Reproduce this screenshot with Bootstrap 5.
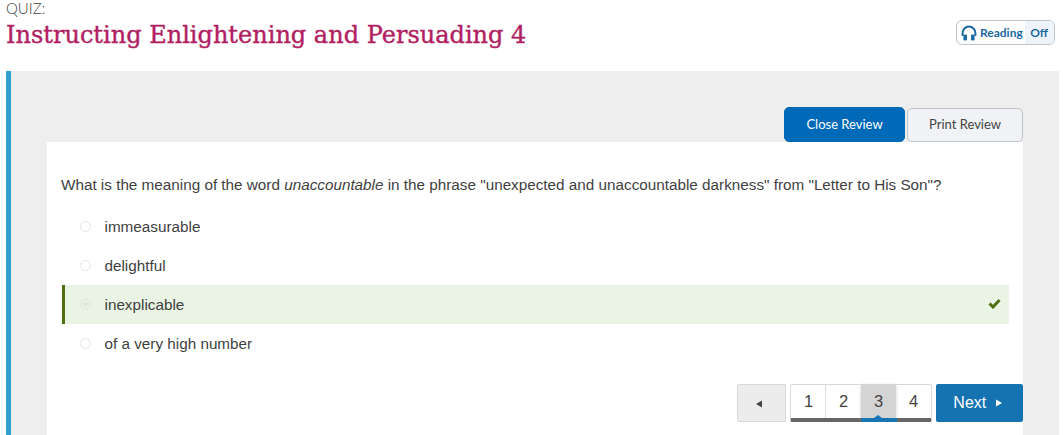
<!DOCTYPE html>
<html lang="en">
<head>
<meta charset="utf-8">
<title>Quiz</title>
<link rel="stylesheet" href="https://cdn.jsdelivr.net/npm/bootstrap@5.3.0/dist/css/bootstrap.min.css">
<style>
html,body{height:435px;overflow:hidden;background:#fff}
body{font-family:"Liberation Sans",Arial,sans-serif;color:#3f3f3f}
.top-head{height:71px;padding:0 8px 0 6px}
.quiz-label{font-family:Lato,sans-serif;font-size:15px;font-weight:300;line-height:16px;color:#444}
.quiz-title{font-family:"DejaVu Serif",serif;font-size:24px;line-height:36px;color:#b11f63;margin:1px 0 0;font-weight:400;letter-spacing:.01px;-webkit-text-stroke:.4px #b11f63}
.read-toggle{font-family:Lato,sans-serif;font-weight:700;font-size:12px;color:#1a6aa5;border:1px solid #bcc3c9;border-radius:6px;height:25px;margin-top:20px;width:99px;overflow:hidden;background:#fff}
.read-on{padding-left:4px;gap:3px;flex:1}
.read-off{background:#eef4f9;padding:0 6px 0 5px;height:100%}
.stage{margin:0 4px 0 6px;height:364px;background:#eee;border-left:5px solid #2f9fd0;padding:36px 36px 0 36px}
.review-bar{height:35px;gap:2px;width:976px}
.btn-close-review,.btn-print-review{font-family:Lato,sans-serif;height:35px;padding:0;border-radius:5px;--bs-btn-font-size:13px}
.btn-close-review{width:121px;background:#0069b8;border:1px solid #0069b8;color:#fff}
.btn-print-review{width:116px;height:34px;margin-top:1px;background:#f0f2f6;border:1px solid #c0c4c8;color:#444}
.quiz-sheet{background:#fff;height:293px;width:976px;padding:0 14px}
.question{font-size:15.28px;line-height:20px;padding-top:33px;margin:0 0 12px;white-space:nowrap}
.option{height:39px;font-size:15.28px;padding-left:17px;gap:13.5px;margin-left:1px;line-height:20px}
.option + .option .option-text{padding-top:1px}
.radio-dot{width:11px;height:11px;border-radius:50%;border:1px solid #e4e7e4;background:#fff;flex:none;margin-left:1px}
.option-right{background:#eaf4e4;border-left:3px solid #4f6f12;padding-left:14px;margin-left:1px}
.option-right .radio-dot{background:#dfe8da;border-color:#dfe8da;box-shadow:inset 0 0 0 2px #eaf4e4}
.tick{margin:0 8px 2px 0}
.pager-row{margin-top:21px;margin-right:-14px;gap:4px}
.prev-btn{width:49px;height:38px;background:#ececec;border:1px solid #d8d8d8;border-radius:2px 0 0 2px;padding:0 6px 0 0}
.pages{width:142px;height:38px;border:1px solid #d8d8d8;border-bottom:4px solid #666;border-radius:2px;background:#fff;position:relative}
.page-num{flex:1;font-size:16.5px;color:#444;text-align:center;line-height:33px}
.page-num:first-child{flex:none;width:35px;border-right:1px solid #ddd;padding-left:1px}
.page-now{background:#d4d4d4;box-shadow:0 0 3px #ccc}
.now-bar{position:absolute;left:70px;width:36px;bottom:-4px;height:4px;background:#1a75b5}
.now-caret{position:absolute;left:83px;bottom:0;width:0;height:0;border-left:4px solid transparent;border-right:4px solid transparent;border-bottom:3px solid #1a75b5}
.next-btn{width:87px;height:38px;background:#1573b2;color:#fff;border:0;border-radius:2px;padding:0 3px 0 0;--bs-btn-font-size:16px}
.next-btn svg{margin-bottom:2px}
</style>
</head>
<body>
<header class="top-head d-flex justify-content-between align-items-start">
  <div>
    <div class="quiz-label">QUIZ:</div>
    <h1 class="quiz-title">Instructing Enlightening and Persuading 4</h1>
  </div>
  <div class="read-toggle d-flex align-items-center">
    <span class="read-on d-flex align-items-center">
      <svg width="16" height="16" viewBox="0 0 16 16" aria-hidden="true"><path d="M1.6 11V8a6.4 6.4 0 0 1 12.8 0v3" fill="none" stroke="#1a6aa5" stroke-width="2"/><rect x="2.4" y="9.6" width="3.6" height="6" rx="1.4" fill="#1a6aa5"/><rect x="10" y="9.6" width="3.6" height="6" rx="1.4" fill="#1a6aa5"/></svg>
      Reading
    </span>
    <span class="read-off d-flex align-items-center">Off</span>
  </div>
</header>
<main class="stage">
  <div class="review-bar d-flex justify-content-end">
    <button type="button" class="btn btn-close-review">Close Review</button>
    <button type="button" class="btn btn-print-review">Print Review</button>
  </div>
  <section class="quiz-sheet">
    <p class="question">What is the meaning of the word <em>unaccountable</em> in the phrase "unexpected and unaccountable darkness" from "Letter to His Son"?</p>
    <div class="option d-flex align-items-center"><span class="radio-dot"></span><span class="option-text">immeasurable</span></div>
    <div class="option d-flex align-items-center"><span class="radio-dot"></span><span class="option-text">delightful</span></div>
    <div class="option option-right d-flex align-items-center"><span class="radio-dot"></span><span class="option-text flex-grow-1">inexplicable</span>
      <svg class="tick" width="13" height="11" viewBox="0 0 13 11" aria-hidden="true"><path d="M1.5 5.5 5 9 11.5 2" fill="none" stroke="#4f6f12" stroke-width="3"/></svg>
    </div>
    <div class="option d-flex align-items-center"><span class="radio-dot"></span><span class="option-text">of a very high number</span></div>
    <div class="pager-row d-flex justify-content-end">
      <button type="button" class="btn prev-btn"><svg width="8" height="8" viewBox="0 0 8 8" aria-hidden="true"><path d="M7 0.5V7.5L1 4Z" fill="#444"/></svg></button>
      <div class="pages d-flex">
        <span class="page-num">1</span><span class="page-num">2</span><span class="page-num page-now">3</span><span class="page-num">4</span>
        <span class="now-bar"></span><span class="now-caret"></span>
      </div>
      <button type="button" class="btn next-btn">Next <svg class="ms-1" width="8" height="8" viewBox="0 0 8 8" aria-hidden="true"><path d="M1 0.5V7.5L7 4Z" fill="#fff"/></svg></button>
    </div>
  </section>
</main>
<script src="https://cdn.jsdelivr.net/npm/bootstrap@5.3.0/dist/js/bootstrap.bundle.min.js"></script>
</body>
</html>
